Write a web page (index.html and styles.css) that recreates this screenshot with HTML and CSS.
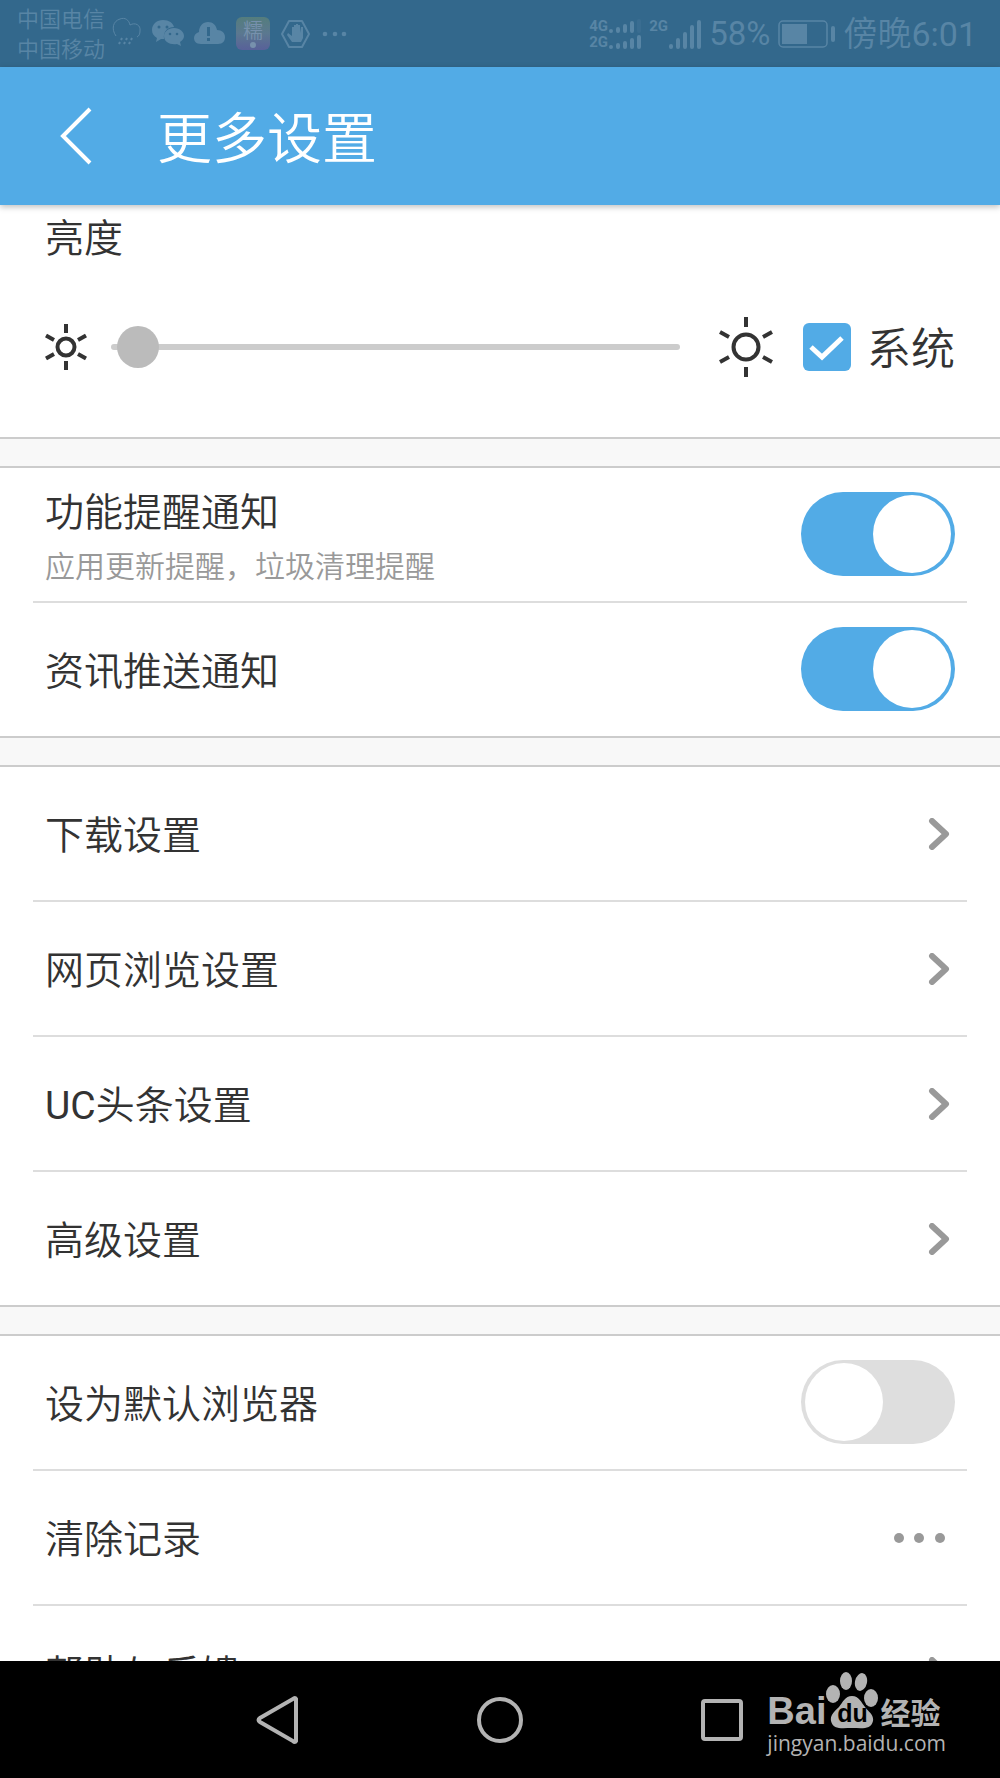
FILE: index.html
```html
<!DOCTYPE html>
<html lang="zh-CN">
<head>
    <meta charset="UTF-8">
    <meta name="viewport" content="width=device-width, initial-scale=1.0">
    <title>更多设置</title>
    <link rel="stylesheet" href="styles.css">
</head>
<body>
    <div class="status-bar">
        <div class="carriers">
            <div>中国电信</div>
            <div>中国移动</div>
        </div>
        <div class="status-icons">
            <!-- rain -->
            <svg width="30" height="36" viewBox="0 0 30 36" fill="none" stroke="currentColor">
                <path d="M4 20C-1 13 1 5 8 3C13 1 17 4 18 9C23 6 29 9 28 15C28 18 27 20 25 21" stroke-width="1"/>
                <path d="M10 22l-1 2M15 22l-1 2M20 22l-1 2M8 26l-1 2M13 26l-1 2M18 26l-1 2" stroke-width="2"/>
            </svg>
            <!-- chat -->
            <svg width="32" height="36" viewBox="0 0 32 36" fill="currentColor">
                <path d="M11 4C5 4 0 8 0 14c0 4 2 6 5 8l-1 4 5-3h3c-1-8 4-12 10-12C21 7 17 4 11 4z"/>
                <path d="M22 12c-6 0-10 4-10 8 0 6 6 9 13 8l4 2-1-4c3-2 4-4 4-6 0-4-4-8-10-8z"/>
                <g class="cutout"><circle cx="7" cy="11" r="1.5"/><circle cx="15" cy="11" r="1.5"/><circle cx="18" cy="18" r="1.3"/><circle cx="25" cy="18" r="1.3"/></g>
            </svg>
            <!-- cloud alert -->
            <svg width="32" height="36" viewBox="0 0 32 36" fill="currentColor">
                <path d="M7 28C2 28 0 25 0 22c0-3 2-5 5-6C5 10 9 6 14 6s8 3 9 8c5 0 8 3 8 7s-2 7-7 7z"/>
                <path class="cutout" d="M13 11h3v9h-3zM13 22h3v3h-3z"/>
            </svg>
            <!-- app badge -->
            <svg width="34" height="36" viewBox="0 0 34 36">
                <defs>
                    <linearGradient id="badge" x1="0" y1="0" x2="0" y2="1">
                        <stop offset="0" stop-color="#547d7d"/>
                        <stop offset="0.5" stop-color="#5b7890"/>
                        <stop offset="1" stop-color="#586199"/>
                    </linearGradient>
                </defs>
                <rect y="1" width="34" height="33" rx="6" fill="url(#badge)"/>
                <text class="badge-text" x="17" y="22" text-anchor="middle" font-size="20">糯</text>
                <circle cx="17" cy="29" r="3" fill="#7791ad"/>
            </svg>
            <!-- blocker -->
            <svg width="32" height="36" viewBox="0 0 32 36">
                <path d="M9 5h13l7 13-7 13H9L2 18z" fill="none" stroke="currentColor" stroke-width="2" stroke-linejoin="round"/>
                <path d="M12 26l-5-7 1-2 4 3v-9h2v6V9h2v8V8h2v9V9h2v8l1-6h2v11l-2 4z" fill="currentColor"/>
            </svg>
            <!-- more -->
            <svg width="26" height="36" viewBox="0 0 26 36" fill="currentColor">
                <circle cx="3" cy="18" r="2.3"/><circle cx="13" cy="18" r="2.3"/><circle cx="22" cy="18" r="2.3"/>
            </svg>
        </div>
        <div class="status-right">
            <div class="network">
                <div class="network-names"><span>4G</span><span>2G</span></div>
                <svg width="33" height="32" viewBox="0 0 33 32" stroke="currentColor" stroke-width="4" stroke-linecap="round">
                    <path d="M3 13v0M10 11v2M17 8v5M24 5v8M3 29v0M10 27v2M17 25v4M24 22v7M31 19v10"/>
                    <path d="M31 3v10" opacity="0.2"/>
                </svg>
            </div>
            <div class="network">
                <div class="network-names"><span>2G</span></div>
                <svg width="33" height="32" viewBox="0 0 33 32" stroke="currentColor" stroke-width="4" stroke-linecap="round">
                    <path d="M3 28v1M10 22v7M17 16v13M24 9v20M31 4v25"/>
                </svg>
            </div>
            <span class="percent latin">58%</span>
            <svg class="battery" width="57" height="28" viewBox="0 0 57 28">
                <rect x="1" y="1" width="48" height="26" rx="4" fill="none" stroke="currentColor" stroke-width="1.5"/>
                <path d="M4 4h25v20H4z" fill="currentColor"/>
                <rect x="53" y="6" width="4" height="16" rx="2" fill="currentColor"/>
            </svg>
            <span class="clock">傍晚<span class="latin">6:01</span></span>
        </div>
    </div>

    <header class="header">
        <button class="back" aria-label="返回">
            <svg width="34" height="60" viewBox="0 0 34 60" fill="none" stroke="currentColor" stroke-width="4">
                <path d="M31 3L4 30l27 27"/>
            </svg>
        </button>
        <h1>更多设置</h1>
    </header>

    <main class="settings">
        <section class="group brightness">
            <h2><label for="brightness">亮度</label></h2>
            <div class="brightness-row">
                <svg width="42" height="48" viewBox="-21 -24 42 48" fill="none" stroke="currentColor" stroke-width="4">
                    <circle r="8.5"/>
                    <path d="M0-23v9M0 14v9M-20-11.500l8 4.500M20-11.500l-8 4.500M-20 11.500l8-4.500M20 11.500l-8-4.500"/>
                </svg>
                <input type="range" id="brightness" min="0" max="255" value="3">
                <svg width="54" height="60" viewBox="-27 -30 54 60" fill="none" stroke="currentColor" stroke-width="4">
                    <circle r="12.500"/>
                    <path d="M0-30v10M0 20v10M-26-15l9 5M26-15l-9 5M-26 15l9-5M26 15l-9-5"/>
                </svg>
                <label class="system">
                    <span class="check">
                        <input type="checkbox" checked>
                        <svg width="48" height="48" viewBox="0 0 48 48" fill="none" stroke="#fff" stroke-width="5">
                            <path d="M8 24l11 10 20-19"/>
                        </svg>
                    </span>
                    <span class="system-text">系统</span>
                </label>
            </div>
        </section>

        <section class="group">
            <label class="row">
                <span class="row-text">功能提醒通知<small>应用更新提醒，垃圾清理提醒</small></span>
                <input type="checkbox" class="toggle" checked>
            </label>
            <label class="row">
                <span class="row-text">资讯推送通知</span>
                <input type="checkbox" class="toggle" checked>
            </label>
        </section>

        <section class="group">
            <a class="row" href="#download">
                <span class="row-text">下载设置</span>
                <svg class="chevron" viewBox="0 0 32 32"><path d="M9 3l14 13L9 29"/></svg>
            </a>
            <a class="row" href="#web">
                <span class="row-text">网页浏览设置</span>
                <svg class="chevron" viewBox="0 0 32 32"><path d="M9 3l14 13L9 29"/></svg>
            </a>
            <a class="row" href="#toutiao">
                <span class="row-text"><span class="latin">UC</span>头条设置</span>
                <svg class="chevron" viewBox="0 0 32 32"><path d="M9 3l14 13L9 29"/></svg>
            </a>
            <a class="row" href="#advanced">
                <span class="row-text">高级设置</span>
                <svg class="chevron" viewBox="0 0 32 32"><path d="M9 3l14 13L9 29"/></svg>
            </a>
        </section>

        <section class="group">
            <label class="row">
                <span class="row-text">设为默认浏览器</span>
                <input type="checkbox" class="toggle">
            </label>
            <button class="row">
                <span class="row-text">清除记录</span>
                <svg width="62" height="12" viewBox="0 0 62 12" fill="#999">
                    <circle cx="6" cy="6" r="5"/><circle cx="26" cy="6" r="5"/><circle cx="47" cy="6" r="5"/>
                </svg>
            </button>
            <a class="row" href="#help">
                <span class="row-text">帮助与反馈</span>
                <svg class="chevron" viewBox="0 0 32 32"><path d="M9 3l14 13L9 29"/></svg>
            </a>
        </section>
    </main>

    <nav class="nav-bar">
        <button aria-label="后退">
            <svg width="56" height="56" viewBox="0 0 56 56"><path d="M46 7v42q-1 2-3 0L10 30q-3-2 0-4L43 7q2-2 3 0z"/></svg>
        </button>
        <button aria-label="主页">
            <svg width="56" height="56" viewBox="0 0 56 56"><circle cx="28" cy="28" r="21"/></svg>
        </button>
        <button aria-label="最近任务">
            <svg width="56" height="56" viewBox="0 0 56 56"><rect x="9" y="9" width="38" height="38" rx="2"/></svg>
        </button>
        <div class="watermark">
            <div class="brand">
                <span>Bai</span>
                <span class="paw">
                    <svg width="52" height="57" viewBox="0 0 52 57" fill="currentColor">
                        <ellipse cx="7" cy="22" rx="7" ry="9"/>
                        <ellipse cx="20" cy="9" rx="6" ry="9"/>
                        <ellipse cx="35" cy="10" rx="6" ry="9" transform="rotate(12 35 10)"/>
                        <ellipse cx="45" cy="26" rx="7" ry="9"/>
                        <path d="M26 24c-7 0-9 6-13 11-5 5-9 8-8 14 2 9 11 7 21 7s19 2 21-7c1-6-4-9-8-14-4-5-6-11-13-11z"/>
                    </svg>
                    <b>du</b>
                </span>
                <span class="brand-cn">经验</span>
            </div>
            <div class="site">jingyan.baidu.com</div>
        </div>
    </nav>
</body>
</html>
```
FILE: styles.css
```css
* {
    box-sizing: border-box;
}

body {
    margin: 0;
    height: 100vh;
    display: flex;
    flex-direction: column;
    background: #fff;
    color: #333;
    font-family: Roboto, "Noto Sans CJK SC", sans-serif;
    font-size: 39px;
    font-weight: 350;
}

button {
    border: 0;
    padding: 0;
    background: none;
    color: inherit;
    font: inherit;
    cursor: pointer;
}

svg {
    display: block;
    flex: none;
}

.latin {
    font-weight: 400;
}

/* Status bar */
.status-bar {
    flex: none;
    height: 67px;
    padding: 0 23px 0 17px;
    display: flex;
    align-items: center;
    background: #33688c;
    color: #5885a5;
    white-space: nowrap;
}

.carriers {
    padding-top: 3px;
    font-size: 22px;
    line-height: 30px;
}

.status-icons {
    display: flex;
    gap: 10px;
    margin-left: 7px;
}

.cutout {
    fill: #33688c;
}

.badge-text {
    fill: #7791ad;
}

.status-right {
    display: flex;
    align-items: center;
    margin-left: auto;
}

.network {
    display: flex;
    margin-right: 8px;
}

.network-names {
    display: flex;
    flex-direction: column;
    width: 19px;
    font-size: 15px;
    font-weight: 700;
    line-height: 16px;
}

.percent {
    font-size: 33px;
}

.battery {
    margin: 0 8px;
}

.clock {
    font-size: 34px;
    line-height: 40px;
}

/* Title bar */
.header {
    position: relative;
    z-index: 1;
    flex: none;
    height: 138px;
    padding-left: 59px;
    display: flex;
    align-items: center;
    gap: 64px;
    background: #52abe6;
    color: #fff;
    box-shadow: 0 2px 6px rgba(0, 0, 0, 0.25);
}

.header h1 {
    margin: 0;
    padding-top: 6px;
    font-size: 55px;
    font-weight: 350;
    line-height: 60px;
}

/* Settings list */
.settings {
    flex: 1;
    min-height: 0;
    overflow: hidden;
    background: #f8f8f8;
}

.group {
    margin-bottom: 27px;
    background: #fff;
    border-top: 2px solid #ccc;
    border-bottom: 2px solid #ccc;
}

.brightness {
    height: 234px;
    padding: 4px 45px 0;
    border-top: 0;
}

.brightness h2 {
    margin: 0;
    font-size: 39px;
    font-weight: 350;
    line-height: 60px;
}

.brightness-row {
    display: flex;
    align-items: center;
    height: 60px;
    margin-top: 48px;
}

.brightness-row input[type="range"] {
    flex: 1;
    min-width: 0;
    height: 42px;
    margin: 0 39px 0 24px;
    appearance: none;
    background: none;
}

input[type="range"]::-webkit-slider-runnable-track {
    height: 6px;
    border-radius: 3px;
    background: #ccc;
}

input[type="range"]::-webkit-slider-thumb {
    appearance: none;
    width: 42px;
    height: 42px;
    margin-top: -18px;
    border-radius: 50%;
    background: #bbb;
}

.system {
    display: flex;
    align-items: center;
    gap: 16px;
    margin-left: 30px;
    font-size: 44px;
    line-height: 60px;
}

.system-text {
    padding-top: 6px;
}

.check {
    display: grid;
}

.check > * {
    grid-area: 1 / 1;
}

.check input {
    appearance: none;
    width: 48px;
    height: 48px;
    margin: 0;
    border-radius: 6px;
    background: #ddd;
}

.check input:checked {
    background: #52abe6;
}

.row {
    position: relative;
    display: flex;
    align-items: center;
    justify-content: space-between;
    width: 100%;
    height: 133px;
    padding: 0 45px;
    color: #333;
    text-align: left;
    text-decoration: none;
}

.row + .row {
    height: 135px;
    padding-top: 2px;
}

.row + .row::before {
    content: "";
    position: absolute;
    top: 0;
    left: 33px;
    right: 33px;
    height: 2px;
    background: #ddd;
}

.row-text {
    padding-top: 4px;
    line-height: 60px;
}

.row-text small {
    display: block;
    color: #999;
    font-size: 30px;
    line-height: 48px;
}

.toggle {
    appearance: none;
    display: flex;
    align-items: center;
    width: 154px;
    height: 84px;
    margin: 0 0 2px;
    padding: 0 4px;
    border-radius: 42px;
    background: #dedede;
}

.toggle::before {
    content: "";
    width: 78px;
    height: 78px;
    border-radius: 50%;
    background: #fff;
}

.toggle:checked {
    justify-content: flex-end;
    background: #52abe6;
}

.chevron {
    width: 32px;
    height: 32px;
    fill: none;
    stroke: #999;
    stroke-width: 6;
    stroke-linecap: round;
    stroke-linejoin: round;
}

/* System navigation */
.nav-bar {
    position: relative;
    flex: none;
    height: 117px;
    display: flex;
    align-items: center;
    justify-content: center;
    gap: 166px;
    background: #000;
}

.nav-bar button svg {
    fill: none;
    stroke: #b3b3b3;
    stroke-width: 4;
}

.watermark {
    position: absolute;
    top: 11px;
    right: 54px;
    color: #b3b3b3;
    white-space: nowrap;
}

.brand {
    display: flex;
    align-items: flex-end;
    font-family: "Liberation Sans", sans-serif;
    font-size: 38px;
    font-weight: 700;
    line-height: 36px;
}

.paw {
    position: relative;
}

.paw b {
    position: absolute;
    left: 0;
    right: 0;
    bottom: 2px;
    color: #000;
    font-size: 25px;
    line-height: 28px;
    text-align: center;
}

.brand-cn {
    margin-left: 2px;
    font-family: "Noto Sans CJK SC", sans-serif;
    font-size: 30px;
}

.site {
    font-family: "Open Sans", sans-serif;
    font-size: 21px;
    font-weight: 400;
    line-height: 28px;
}
```
